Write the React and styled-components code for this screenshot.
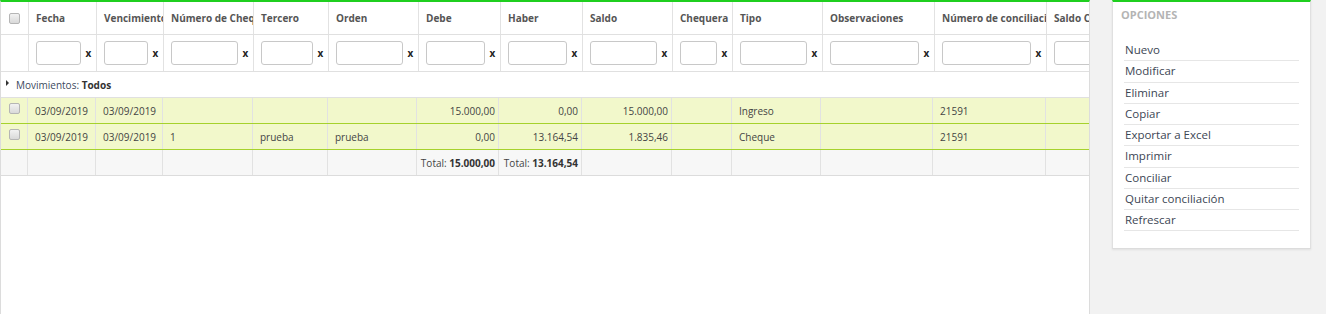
import React from "react";
import styled, { createGlobalStyle } from "styled-components";

const GlobalStyle = createGlobalStyle`
  html, body {
    margin: 0;
    padding: 0;
    background: #f2f2f2;
    font-family: "Open Sans", "Liberation Sans", sans-serif;
    font-size: 11px;
    color: #444;
  }
`;

const HEAD_COLS = [28, 68, 67, 90, 75, 90, 82, 82, 90, 60, 90, 112, 112, 120];
const BODY_COLS = [27, 68, 67, 90, 75, 89, 82, 83, 90, 60, 89, 112, 113, 120];

const Page = styled.div`
  display: flex;
  align-items: flex-start;
  gap: 22px;
  height: 314px;
`;

const GridPanel = styled.div`
  width: 1090px;
  height: 314px;
  flex-shrink: 0;
  background: #fff;
  border-top: 2px solid #1fcf1f;
  border-left: 1px solid #dcdcdc;
  border-right: 1px solid #dcdcdc;
  box-sizing: border-box;
  overflow: hidden;
  font-size: 10px;
`;

const Row = styled.div`
  display: grid;
  grid-template-columns: ${(p) => p.$cols.map((c) => c + "px").join(" ")};
  height: ${(p) => p.$h}px;
  background: ${(p) => p.$bg || "#fff"};
  border-bottom: 1px solid ${(p) => p.$line || "#e0e0e0"};
  box-sizing: border-box;
`;

const Cell = styled.div`
  display: flex;
  align-items: center;
  justify-content: ${(p) => (p.$right ? "flex-end" : p.$center ? "center" : "flex-start")};
  padding: ${(p) => (p.$center ? "0" : p.$right ? "0 3px 0 4px" : "0 4px 0 7px")};
  border-right: 1px solid #e2e2e2;
  box-sizing: border-box;
  overflow: hidden;
  white-space: nowrap;
  min-width: 0;
  color: #444;
`;

const HeadCell = styled(Cell)`
  font-weight: 700;
  color: #555;
  padding-right: 0;
`;

const FilterCell = styled(Cell)`
  padding-right: 0;
`;

const Check = styled.span`
  display: inline-block;
  width: 9px;
  height: 9px;
  border: 1px solid #b5b5b5;
  border-radius: 2px;
  background: linear-gradient(#f2f2f2, #d9d9d9);
  margin-top: ${(p) => p.$top || 0}px;
  align-self: ${(p) => (p.$top ? "flex-start" : "center")};
`;

const FilterInput = styled.input`
  flex: 1;
  min-width: 0;
  height: 24px;
  box-sizing: border-box;
  border: 1px solid #c8c8c8;
  border-radius: 3px;
  background: #fff;
  padding: 0 4px;
  font: inherit;
`;

const Clear = styled.span`
  width: 15px;
  flex-shrink: 0;
  text-align: center;
  font-weight: 700;
  font-size: 10px;
  color: #222;
`;

const GroupRow = styled.div`
  display: flex;
  align-items: center;
  gap: 7px;
  height: 26px;
  padding-left: 5px;
  border-bottom: 1px solid #e0e0e0;
  box-sizing: border-box;
  color: #3c4a5e;
`;

const Caret = styled.span`
  width: 0;
  height: 0;
  border-top: 3px solid transparent;
  border-bottom: 3px solid transparent;
  border-left: 3px solid #333;
  margin-top: -4px;
`;

const Strong = styled.b`
  font-weight: 700;
  color: #333;
`;

const SidePanel = styled.div`
  width: 199px;
  height: 249px;
  flex-shrink: 0;
  background: #fff;
  border-top: 2px solid #1fcf1f;
  border-left: 1px solid #e0e0e0;
  border-right: 1px solid #e0e0e0;
  border-bottom: 1px solid #dcdcdc;
  box-shadow: 0 1px 2px rgba(0, 0, 0, 0.08);
  box-sizing: border-box;
  padding: 6px 11px 0 11px;
`;

const SideTitle = styled.div`
  font-weight: 700;
  color: #b4b4b4;
  line-height: 14px;
  margin-left: -3px;
`;

const MenuList = styled.div`
  display: flex;
  flex-direction: column;
  margin-top: 18px;
`;

const MenuItem = styled.div`
  height: 21.25px;
  line-height: 20px;
  padding-left: 1px;
  border-bottom: 1px solid #e6e6e6;
  box-sizing: border-box;
  font-size: 11.5px;
  color: #3c4654;
  cursor: pointer;
`;

const headers = [
  "",
  "Fecha",
  "Vencimiento",
  "Número de Cheque",
  "Tercero",
  "Orden",
  "Debe",
  "Haber",
  "Saldo",
  "Chequera",
  "Tipo",
  "Observaciones",
  "Número de conciliación",
  "Saldo Conciliado",
];

const rows = [
  ["03/09/2019", "03/09/2019", "", "", "", "15.000,00", "0,00", "15.000,00", "", "Ingreso", "", "21591", ""],
  ["03/09/2019", "03/09/2019", "1", "prueba", "prueba", "0,00", "13.164,54", "1.835,46", "", "Cheque", "", "21591", ""],
];

const totals = ["", "", "", "", "", "15.000,00", "13.164,54", "", "", "", "", "", ""];

const numeric = [5, 6, 7];

const options = [
  "Nuevo",
  "Modificar",
  "Eliminar",
  "Copiar",
  "Exportar a Excel",
  "Imprimir",
  "Conciliar",
  "Quitar conciliación",
  "Refrescar",
];

export default function App() {
  return (
    <>
      <GlobalStyle />
      <Page>
        <GridPanel>
          <Row $cols={HEAD_COLS} $h={33}>
            <HeadCell $center>
              <Check />
            </HeadCell>
            {headers.slice(1).map((h) => (
              <HeadCell key={h}>{h}</HeadCell>
            ))}
          </Row>
          <Row $cols={HEAD_COLS} $h={37}>
            <Cell />
            {headers.slice(1).map((h) => (
              <FilterCell key={h}>
                <FilterInput type="text" />
                <Clear>x</Clear>
              </FilterCell>
            ))}
          </Row>
          <GroupRow>
            <Caret />
            <span>
              Movimientos: <Strong>Todos</Strong>
            </span>
          </GroupRow>
          {rows.map((r, i) => (
            <Row key={i} $cols={BODY_COLS} $h={26} $bg="#f2f8cb" $line="#a6d22c">
              <Cell $center>
                <Check $top={5} />
              </Cell>
              {r.map((v, j) => (
                <Cell key={j} $right={numeric.includes(j)}>
                  {v}
                </Cell>
              ))}
            </Row>
          ))}
          <Row $cols={BODY_COLS} $h={26} $bg="#f7f7f7" $line="#dcdcdc">
            <Cell />
            {totals.map((t, j) => (
              <Cell key={j} $right={numeric.includes(j)}>
                {t && (
                  <>
                    Total:&nbsp;<Strong>{t}</Strong>
                  </>
                )}
              </Cell>
            ))}
          </Row>
        </GridPanel>
        <SidePanel>
          <SideTitle>OPCIONES</SideTitle>
          <MenuList>
            {options.map((o) => (
              <MenuItem key={o}>{o}</MenuItem>
            ))}
          </MenuList>
        </SidePanel>
      </Page>
    </>
  );
}
